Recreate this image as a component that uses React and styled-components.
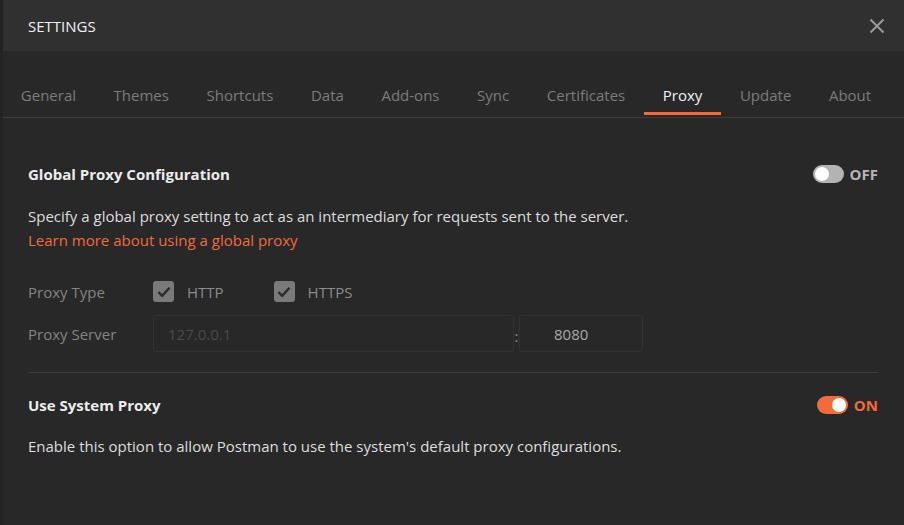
import React from 'react';
import styled, { createGlobalStyle } from 'styled-components';

const GlobalStyle = createGlobalStyle`
    html, body {
        margin: 0;
        padding: 0;
        background: #282828;
    }
    body {
        font-family: 'Open Sans', 'Noto Sans', sans-serif;
        font-size: 15px;
        -webkit-font-smoothing: antialiased;
    }
`;

const Modal = styled.div`
    width: 904px;
    height: 525px;
    display: flex;
    flex-flow: column nowrap;
    background: #282828;
    border-left: 3px solid #232323;
    box-sizing: border-box;
    overflow: hidden;
`;

const Header = styled.header`
    height: 51px;
    flex: 0 0 51px;
    display: flex;
    align-items: center;
    justify-content: space-between;
    padding: 0 17px 0 25px;
    background: #303030;
`;

const Title = styled.div`
    color: #f0f0f0;
    font-size: 15px;
`;

const CloseButton = styled.button`
    width: 20px;
    height: 20px;
    padding: 0;
    border: none;
    background: none;
    display: flex;
    align-items: center;
    justify-content: center;
    cursor: pointer;
`;

const TabBar = styled.nav`
    display: flex;
    align-items: flex-end;
    padding: 34px 0 0 0;
    border-bottom: 1px solid #3d3d3d;
    margin-left: -1px;
`;

const Tab = styled.div`
    padding: 0 18.8px 7px;
    margin-bottom: 2px;
    font-size: 15px;
    line-height: 20px;
    color: ${props => (props.active ? '#f2f2f2' : '#7c7c7c')};
    border-bottom: 3px solid ${props => (props.active ? '#f26b3a' : 'transparent')};
    white-space: nowrap;
`;

const Content = styled.main`
    padding: 46px 26px 0 25px;
    display: flex;
    flex-flow: column nowrap;
`;

const SectionHead = styled.div`
    display: flex;
    align-items: center;
    justify-content: space-between;
    height: 20px;
`;

const Heading = styled.div`
    font-weight: 700;
    font-size: 15px;
    color: #ececec;
    line-height: 20px;
`;

const ToggleWrap = styled.div`
    display: flex;
    align-items: center;
    gap: 6px;
`;

const Track = styled.div`
    position: relative;
    width: 31px;
    height: 18px;
    border-radius: 9px;
    background: ${props => (props.on ? '#f26b3a' : '#b3b3b3')};
`;

const Knob = styled.div`
    position: absolute;
    top: 2px;
    left: ${props => (props.on ? '15px' : '2px')};
    width: 14px;
    height: 14px;
    border-radius: 50%;
    background: #ffffff;
`;

const ToggleLabel = styled.span`
    font-weight: 700;
    font-size: 15px;
    color: ${props => (props.on ? '#f26b3a' : '#b5b5b5')};
`;

const Description = styled.p`
    margin: ${props => props.margin || '20px 0 0'};
    color: #dedede;
    font-size: 15px;
    line-height: 24px;
`;

const Link = styled.a`
    display: block;
    color: #f26b3a;
    text-decoration: none;
    cursor: pointer;
`;

const FormRow = styled.div`
    display: flex;
    align-items: center;
    margin-top: ${props => props.top || '0'};
`;

const Label = styled.div`
    width: 125px;
    flex: 0 0 125px;
    color: #848484;
    font-size: 15px;
`;

const CheckItem = styled.label`
    display: flex;
    align-items: center;
    gap: 13px;
    margin-right: 50px;
    color: #8c8c8c;
    font-size: 15px;
`;

const CheckBox = styled.span`
    width: 21px;
    height: 21px;
    border-radius: 3px;
    background: #7a7a7a;
    display: flex;
    align-items: center;
    justify-content: center;
`;

const Input = styled.div`
    box-sizing: border-box;
    width: ${props => props.width}px;
    height: 37px;
    border: 1px solid #333333;
    border-radius: 3px;
    background: #282828;
    display: flex;
    align-items: center;
    padding: 0 0 0 ${props => props.indent || 14}px;
    color: ${props => (props.muted ? '#4a4a4a' : '#a8a8a8')};
    font-size: 15px;
`;

const Colon = styled.span`
    width: 5px;
    color: #8c8c8c;
    text-align: center;
    padding-top: 4px;
`;

const Divider = styled.hr`
    border: none;
    border-top: 1px solid #3d3d3d;
    margin: 20px 0 22px;
    width: 850px;
`;

function Toggle({ on }) {
    return (
        <ToggleWrap>
            <Track on={on ? 1 : 0}>
                <Knob on={on ? 1 : 0} />
            </Track>
            <ToggleLabel on={on ? 1 : 0}>{on ? 'ON' : 'OFF'}</ToggleLabel>
        </ToggleWrap>
    );
}

function Check({ label }) {
    return (
        <CheckItem>
            <CheckBox>
                <svg width="14" height="12" viewBox="0 0 14 12">
                    <path d="M1.5 6.2 L5.2 9.8 L12.5 1.8" fill="none" stroke="#2b2b2b" strokeWidth="2.4" />
                </svg>
            </CheckBox>
            {label}
        </CheckItem>
    );
}

const tabs = ['General', 'Themes', 'Shortcuts', 'Data', 'Add-ons', 'Sync', 'Certificates', 'Proxy', 'Update', 'About'];

export default function App() {
    return (
        <>
            <GlobalStyle />
            <Modal>
                <Header>
                    <Title>SETTINGS</Title>
                    <CloseButton>
                        <svg width="16" height="16" viewBox="0 0 16 16">
                            <path d="M1.5 1.5 L14.5 14.5 M14.5 1.5 L1.5 14.5" stroke="#9a9a9a" strokeWidth="2" />
                        </svg>
                    </CloseButton>
                </Header>
                <TabBar>
                    {tabs.map(t => (
                        <Tab key={t} active={t === 'Proxy'}>{t}</Tab>
                    ))}
                </TabBar>
                <Content>
                    <SectionHead>
                        <Heading>Global Proxy Configuration</Heading>
                        <Toggle on={false} />
                    </SectionHead>
                    <Description>
                        Specify a global proxy setting to act as an intermediary for requests sent to the server.
                        <Link>Learn more about using a global proxy</Link>
                    </Description>
                    <FormRow top="29px">
                        <Label>Proxy Type</Label>
                        <Check label="HTTP" />
                        <Check label="HTTPS" />
                    </FormRow>
                    <FormRow top="13px">
                        <Label>Proxy Server</Label>
                        <Input width={361} muted>127.0.0.1</Input>
                        <Colon>:</Colon>
                        <Input width={124} indent={34}>8080</Input>
                    </FormRow>
                    <Divider />
                    <SectionHead>
                        <Heading>Use System Proxy</Heading>
                        <Toggle on />
                    </SectionHead>
                    <Description margin="19px 0 0">
                        Enable this option to allow Postman to use the system's default proxy configurations.
                    </Description>
                </Content>
            </Modal>
        </>
    );
}
